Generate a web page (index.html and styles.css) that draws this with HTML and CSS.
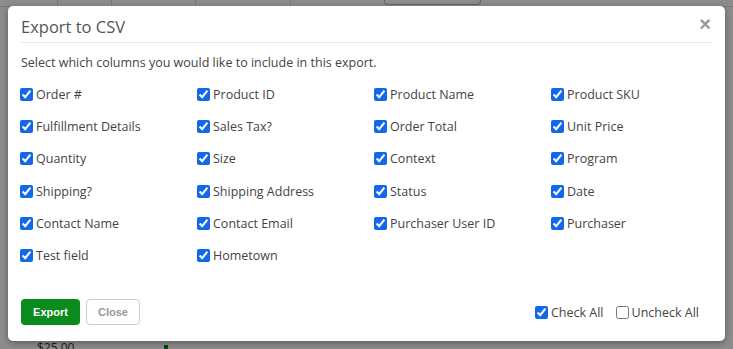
FILE: index.html
```html
<!DOCTYPE html>
<html lang="en">
<head>
    <meta charset="UTF-8">
    <meta name="viewport" content="width=device-width, initial-scale=1.0">
    <title>Export to CSV</title>
    <link rel="stylesheet" href="styles.css">
</head>
<body>
    <!-- page behind the modal -->
    <div class="page">
        <div class="row-top">
            <span class="cell c1"></span>
            <span class="cell c2"></span>
            <span class="cell c3"></span>
            <span class="cell c4"></span>
            <span class="ghost-btn"></span>
        </div>
        <div class="row-bottom">
            <span class="price">$25.00</span>
            <span class="status-dot"></span>
        </div>
    </div>
    <div class="backdrop"></div>

    <!-- Export Modal -->
    <div class="modal">
        <div class="modal-header">
            <h2>Export to CSV</h2>
            <span class="close">&times;</span>
        </div>
        <div class="modal-body">
            <p class="intro">Select which columns you would like to include in this export.</p>
            <div class="columns">
                <label class="col"><input type="checkbox" checked> Order #</label>
                <label class="col"><input type="checkbox" checked> Product ID</label>
                <label class="col"><input type="checkbox" checked> Product Name</label>
                <label class="col"><input type="checkbox" checked> Product SKU</label>
                <label class="col"><input type="checkbox" checked> Fulfillment Details</label>
                <label class="col"><input type="checkbox" checked> Sales Tax?</label>
                <label class="col"><input type="checkbox" checked> Order Total</label>
                <label class="col"><input type="checkbox" checked> Unit Price</label>
                <label class="col"><input type="checkbox" checked> Quantity</label>
                <label class="col"><input type="checkbox" checked> Size</label>
                <label class="col"><input type="checkbox" checked> Context</label>
                <label class="col"><input type="checkbox" checked> Program</label>
                <label class="col"><input type="checkbox" checked> Shipping?</label>
                <label class="col"><input type="checkbox" checked> Shipping Address</label>
                <label class="col"><input type="checkbox" checked> Status</label>
                <label class="col"><input type="checkbox" checked> Date</label>
                <label class="col"><input type="checkbox" checked> Contact Name</label>
                <label class="col"><input type="checkbox" checked> Contact Email</label>
                <label class="col"><input type="checkbox" checked> Purchaser User ID</label>
                <label class="col"><input type="checkbox" checked> Purchaser</label>
                <label class="col"><input type="checkbox" checked> Test field</label>
                <label class="col"><input type="checkbox" checked> Hometown</label>
            </div>
        </div>
        <div class="modal-footer">
            <button class="btn btn-export">Export</button>
            <button class="btn btn-close">Close</button>
            <div class="toggles">
                <label class="col"><input type="checkbox" checked> Check All</label>
                <label class="col"><input type="checkbox"> Uncheck All</label>
            </div>
        </div>
    </div>
</body>
</html>
```
FILE: styles.css
```css
body {
    margin: 0;
    font-family: "Open Sans", sans-serif;
    background: #fff;
    height: 349px;
    overflow: hidden;
}
.page {
    height: 349px;
    display: flex;
    flex-direction: column;
    justify-content: space-between;
}
.row-top {
    display: flex;
    height: 6px;
    border-bottom: 1px solid #ddd;
}
.cell {
    border-right: 1px solid #ddd;
}
.c1 { width: 57px; }
.c2 { width: 53px; }
.c3 { width: 83px; }
.c4 { width: 94px; }
.ghost-btn {
    margin-left: 93px;
    width: 95px;
    height: 4px;
    border: 1px solid #bbb;
    border-top: none;
    border-radius: 0 0 4px 4px;
}
.row-bottom {
    height: 8px;
    font-size: 12px;
    color: #333;
    display: flex;
    align-items: flex-start;
}
.price {
    margin-left: 37px;
    line-height: 14px;
}
.status-dot {
    margin-left: 90px;
    width: 4px;
    height: 4px;
    background: #0a7d1e;
    margin-top: 4px;
}
.backdrop {
    position: absolute;
    left: 0;
    top: 0;
    width: 100%;
    height: 100%;
    background: rgba(0, 0, 0, 0.45);
}
/* Modal */
.modal {
    position: absolute;
    left: 8px;
    top: 6px;
    width: 717px;
    height: 335px;
    background: #fff;
    border-radius: 5px;
    box-shadow: 0 2px 6px rgba(0, 0, 0, 0.35);
    display: flex;
    flex-direction: column;
    color: #444;
}
.modal-header {
    margin: 0 12px 0 13px;
    height: 36px;
    border-bottom: 1px solid #e8e8e8;
    display: flex;
    justify-content: space-between;
    align-items: center;
}
.modal-header h2 {
    margin: 4px 0 0 0;
    font-size: 16.5px;
    font-weight: normal;
    color: #555;
}
.close {
    font-family: "Liberation Sans", sans-serif;
    font-size: 20px;
    font-weight: bold;
    color: #999;
    margin-top: 0;
    margin-right: 2px;
}
.modal-body {
    padding: 0 13px;
    flex: 1;
}
.intro {
    margin: 11px 0 14px 0;
    font-size: 12.5px;
    color: #444;
}
.columns {
    display: grid;
    grid-template-columns: repeat(4, 177px);
    grid-auto-rows: 32.4px;
}
.col {
    font-size: 12.5px;
    color: #444;
    display: flex;
    align-items: center;
    height: 18px;
}
.col input {
    width: 13px;
    height: 13px;
    margin: 0 3px 0 -1px;
    accent-color: #1267ea;
}
.modal-footer {
    padding: 0 13px 16px 13px;
    display: flex;
    align-items: center;
}
.btn {
    font-family: "Liberation Sans", sans-serif;
    font-size: 11px;
    font-weight: bold;
    height: 26px;
    border-radius: 4px;
    cursor: pointer;
}
.btn-export {
    width: 59px;
    background: #0b8a1e;
    color: #fff;
    border: none;
}
.btn-close {
    width: 54px;
    margin-left: 6px;
    background: #fff;
    color: #999;
    border: 1px solid #ccc;
}
.toggles {
    margin-left: auto;
    margin-right: 13px;
    display: flex;
    gap: 13px;
}
.toggles .col {
    color: #444;
}
```
